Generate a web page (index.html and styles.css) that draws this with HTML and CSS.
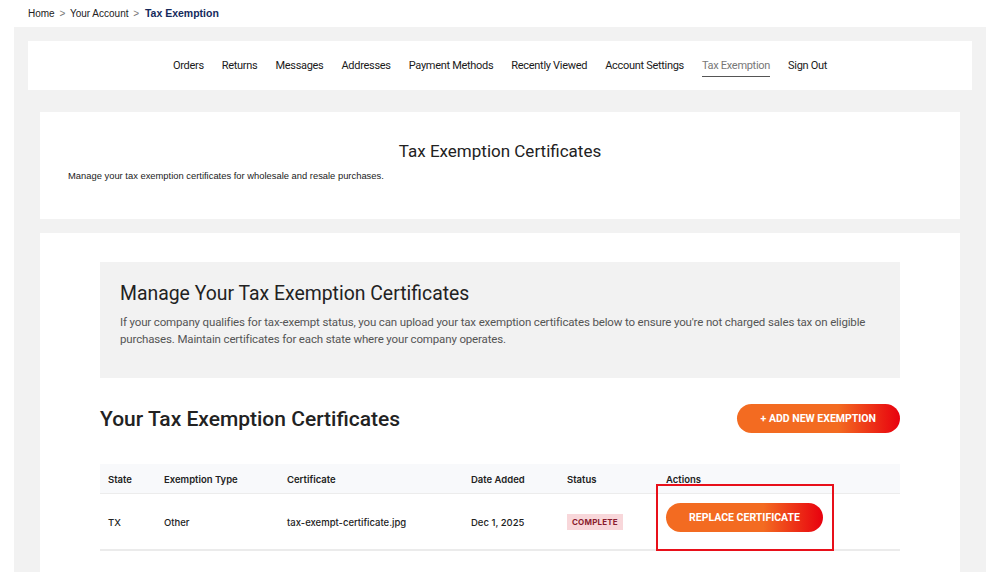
FILE: index.html
```html
<!DOCTYPE html>
<html lang="en">
<head>
  <meta charset="UTF-8">
  <meta name="viewport" content="width=device-width, initial-scale=1.0">
  <title>Tax Exemption - Your Account</title>
  <link rel="stylesheet" href="styles.css">
</head>
<body>
  <nav class="breadcrumb">
    <a href="#">Home</a>
    <span class="sep">&gt;</span>
    <a href="#">Your Account</a>
    <span class="sep">&gt;</span>
    <span class="current">Tax Exemption</span>
  </nav>

  <div class="account-wrap">
    <ul class="account-nav">
      <li><a href="#">Orders</a></li>
      <li><a href="#">Returns</a></li>
      <li><a href="#">Messages</a></li>
      <li><a href="#">Addresses</a></li>
      <li><a href="#">Payment Methods</a></li>
      <li><a href="#">Recently Viewed</a></li>
      <li><a href="#">Account Settings</a></li>
      <li><a href="#" class="active">Tax Exemption</a></li>
      <li><a href="#">Sign Out</a></li>
    </ul>

    <section class="panel page-head">
      <h1>Tax Exemption Certificates</h1>
      <p>Manage your tax exemption certificates for wholesale and resale purchases.</p>
    </section>

    <section class="panel certs">
      <div class="info-box">
        <h2>Manage Your Tax Exemption Certificates</h2>
        <p>If your company qualifies for tax-exempt status, you can upload your tax exemption certificates below to ensure you're not charged sales tax on eligible purchases. Maintain certificates for each state where your company operates.</p>
      </div>

      <div class="certs-head">
        <h2>Your Tax Exemption Certificates</h2>
        <button class="btn">+ Add New Exemption</button>
      </div>

      <table class="certs-table">
        <thead>
          <tr>
            <th class="col-state">State</th>
            <th class="col-type">Exemption Type</th>
            <th class="col-file">Certificate</th>
            <th class="col-date">Date Added</th>
            <th class="col-status">Status</th>
            <th>Actions</th>
          </tr>
        </thead>
        <tbody>
          <tr>
            <td>TX</td>
            <td>Other</td>
            <td>tax-exempt-certificate.jpg</td>
            <td>Dec 1, 2025</td>
            <td><span class="badge">Complete</span></td>
            <td class="actions">
              <button class="btn btn-replace">Replace Certificate</button>
              <span class="highlight"></span>
            </td>
          </tr>
        </tbody>
      </table>
    </section>
  </div>
</body>
</html>
```

FILE: styles.css
```css
* {
  margin: 0;
  padding: 0;
  box-sizing: border-box;
}

body {
  background-color: white;
  color: #222;
  font-family: Roboto, "Noto Sans", sans-serif;
}

a {
  color: inherit;
  text-decoration: none;
}

.breadcrumb {
  height: 27px;
  padding: 7px 28px 0;
  font-family: "Liberation Sans", Arial, sans-serif;
  font-size: 10px;
  color: #222;
}

.breadcrumb .sep {
  color: #777;
  margin: 0 2px;
}

.breadcrumb .current {
  font-weight: bold;
  color: #152a5c;
  font-size: 10.5px;
  margin-left: 1px;
}

.account-wrap {
  background-color: #f2f2f2;
  margin: 0 14px;
  padding: 14px 14px 0;
  min-height: 545px;
}

.account-nav {
  list-style: none;
  background-color: white;
  height: 49px;
  display: flex;
  justify-content: center;
  align-items: center;
  gap: 18px;
  font-size: 11px;
  letter-spacing: -0.3px;
  color: #1a1a1a;
  margin-bottom: 22px;
}

.account-nav a {
  display: block;
  padding: 5px 0 4px;
  border-bottom: 1px solid transparent;
}

.account-nav a.active {
  color: #777;
  border-bottom-color: #555;
}

.panel {
  background-color: white;
  margin: 0 12px 14px;
}

.page-head {
  height: 107px;
  padding: 28px 28px 0;
}

.page-head h1 {
  font-size: 17px;
  font-weight: normal;
  text-align: center;
  line-height: 22px;
}

.page-head p {
  font-family: "Liberation Sans", Arial, sans-serif;
  font-size: 9.4px;
  color: #222;
  margin-top: 8px;
}

.certs {
  padding: 29px 60px 60px;
}

.info-box {
  background-color: #f2f2f2;
  padding: 21px 20px 30px;
}

.info-box h2 {
  font-size: 19.4px;
  font-weight: normal;
  line-height: 22px;
  margin-bottom: 9px;
}

.info-box p {
  font-size: 11.5px;
  letter-spacing: -0.15px;
  line-height: 17px;
  color: #555;
}

.certs-head {
  display: flex;
  justify-content: space-between;
  align-items: center;
  margin: 26px 0 31px;
}

.certs-head h2 {
  font-size: 21px;
  font-weight: 500;
}

.btn {
  border: none;
  border-radius: 15px;
  height: 29px;
  padding: 0 24px;
  background: linear-gradient(90deg, #f36b21 0%, #f36b21 62%, #e8000e 100%);
  color: white;
  font-family: Roboto, sans-serif;
  font-weight: bold;
  font-size: 10.5px;
  text-transform: uppercase;
  cursor: pointer;
}

.certs-table {
  width: 100%;
  border-collapse: collapse;
  table-layout: fixed;
  font-family: Inter, sans-serif;
  font-size: 9.5px;
  color: #222;
}

.certs-table th {
  background-color: #f8f9fb;
  height: 29px;
  text-align: left;
  font-weight: 600;
  padding: 3px 8px 0;
  border-bottom: 1px solid #ececec;
}

.col-state { width: 56px; }
.col-type { width: 123px; }
.col-file { width: 184px; }
.col-date { width: 96px; }
.col-status { width: 99px; }

.certs-table td {
  height: 57px;
  padding: 2px 8px 0;
  font-weight: 500;
  border-bottom: 2px solid #ebebeb;
}

.badge {
  display: inline-block;
  background-color: #f8d7da;
  color: #8a1c2e;
  font-size: 8px;
  font-weight: 700;
  letter-spacing: 0.2px;
  text-transform: uppercase;
  padding: 3px 5px;
}

.actions {
  position: relative;
}

.btn-replace {
  width: 157px;
  padding: 0;
  font-size: 10.5px;
  margin-bottom: 10px;
}

.highlight {
  position: absolute;
  left: -2px;
  top: -10px;
  width: 178px;
  height: 67px;
  border: 2px solid #e8101a;
}
```
